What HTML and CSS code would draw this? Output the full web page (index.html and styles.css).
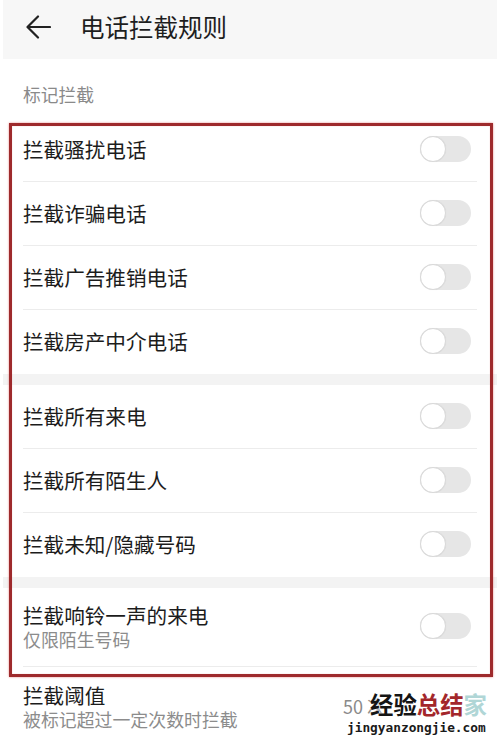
FILE: index.html
```html
<!DOCTYPE html>
<html lang="zh-CN">
<head>
<meta charset="utf-8">
<title>电话拦截规则</title>
<link rel="stylesheet" href="styles.css">
</head>
<body>
<div class="page">
  <header class="topbar">
    <svg class="back" width="25" height="24" viewBox="0 0 25 24" aria-hidden="true">
      <path d="M24 12 H2 M12 1.5 L1.5 12 L12 22.5" fill="none" stroke="#222" stroke-width="2.2" stroke-linecap="round" stroke-linejoin="round"/>
    </svg>
    <h1 class="title">电话拦截规则</h1>
  </header>

  <div class="section-label">标记拦截</div>

  <div class="rules">
    <div class="group">
      <div class="row"><span class="row-title">拦截骚扰电话</span><span class="switch"><span class="knob"></span></span></div>
      <div class="row"><span class="row-title">拦截诈骗电话</span><span class="switch"><span class="knob"></span></span></div>
      <div class="row"><span class="row-title">拦截广告推销电话</span><span class="switch"><span class="knob"></span></span></div>
      <div class="row"><span class="row-title">拦截房产中介电话</span><span class="switch"><span class="knob"></span></span></div>
    </div>
    <div class="band"></div>
    <div class="group">
      <div class="row"><span class="row-title">拦截所有来电</span><span class="switch"><span class="knob"></span></span></div>
      <div class="row"><span class="row-title">拦截所有陌生人</span><span class="switch"><span class="knob"></span></span></div>
      <div class="row"><span class="row-title">拦截未知/隐藏号码</span><span class="switch"><span class="knob"></span></span></div>
    </div>
    <div class="band"></div>
    <div class="row row-tall row-sep">
      <div class="texts">
        <span class="row-title">拦截响铃一声的来电</span>
        <span class="row-sub">仅限陌生号码</span>
      </div>
      <span class="switch"><span class="knob"></span></span>
    </div>
    <div class="highlight"></div>
  </div>

  <div class="row row-tall row-last">
    <div class="texts">
      <span class="row-title">拦截阈值</span>
      <span class="row-sub">被标记超过一定次数时拦截</span>
    </div>
    <span class="value">50 次</span>
  </div>
</div>

<div class="watermark">
  <div class="wm-cn"><span class="wm-black">经验</span><span class="wm-red">总结</span><span class="wm-teal">家</span></div>
  <div class="wm-en">jingyanzongjie.com</div>
</div>
</body>
</html>
```

FILE: styles.css
```css
* { box-sizing: border-box; }

html, body {
  margin: 0;
  padding: 0;
  background: #ffffff;
}

body {
  width: 500px;
  height: 743px;
  overflow: hidden;
  position: relative;
  font-family: "Noto Sans CJK SC", "Noto Sans", sans-serif;
  color: #1c1c1c;
}

.page {
  padding: 0 3px;
}

.topbar {
  height: 59px;
  background: #f7f7f7;
  display: flex;
  align-items: center;
  padding-left: 23px;
  padding-bottom: 5px;
}

.back {
  display: block;
  flex: none;
}

.title {
  margin: 0 0 0 29px;
  font-size: 24.5px;
  font-weight: 400;
  line-height: 1;
  color: #1e1e1e;
}

.section-label {
  height: 59px;
  padding: 26px 0 0 20px;
  font-size: 17.8px;
  line-height: 18px;
  color: #8a8a8a;
}

.rules {
  position: relative;
}

.row {
  height: 64px;
  margin: 0 20px;
  display: flex;
  align-items: center;
  justify-content: space-between;
  padding-right: 6px;
  padding-bottom: 2px;
  border-bottom: 1px solid #ececec;
}

.group .row:last-child {
  border-bottom: none;
}

.row-title {
  font-size: 20.6px;
  line-height: 26px;
  color: #1c1c1c;
}

.row-tall {
  height: 79px;
}

.row-last {
  border-bottom: none;
}

.texts {
  display: flex;
  flex-direction: column;
}

.row-sub {
  font-size: 17.9px;
  line-height: 22px;
  color: #8c8c8c;
}

.band {
  height: 11px;
  background: #f3f3f3;
}

.switch {
  width: 51px;
  height: 26px;
  border-radius: 13px;
  background: #e6e6e6;
  display: flex;
  align-items: center;
  flex: none;
}

.knob {
  width: 26px;
  height: 26px;
  border-radius: 50%;
  background: #ffffff;
  border: 1px solid #d9d9d9;
  box-shadow: 0 0 1px rgba(0, 0, 0, 0.08);
}

.value {
  font-size: 18px;
  color: #8a8a8a;
  margin-right: 86px;
  line-height: 22px;
}

.highlight {
  position: absolute;
  top: 5px;
  left: 6px;
  right: 4px;
  bottom: -10px;
  border: 3px solid #9e2a2c;
  box-shadow: 0 0 2px rgba(225, 90, 90, 0.7), inset 0 0 1px rgba(225, 90, 90, 0.6);
  pointer-events: none;
}

.watermark {
  position: absolute;
  left: 347px;
  top: 691px;
  width: 142px;
}

.wm-cn {
  padding-left: 23px;
  font-size: 23.4px;
  font-weight: 700;
  line-height: 27px;
}

.wm-black {
  color: #151515;
  text-shadow: 0 0 2px #fff, 0 0 2px #fff;
}

.wm-red {
  color: #a3272b;
}

.wm-teal {
  color: #b0d6d6;
}

.wm-en {
  font-family: "DejaVu Sans Mono", "Liberation Mono", monospace;
  font-weight: 700;
  font-size: 12.8px;
  line-height: 16px;
  color: #1a1a1a;
  margin-top: 2px;
  text-shadow: 0 0 2px #fff, 0 0 2px #fff;
}
```
